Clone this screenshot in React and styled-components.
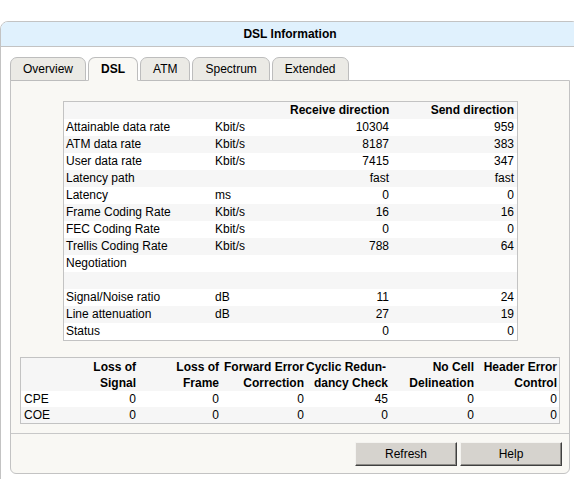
import React from "react";
import styled, { createGlobalStyle } from "styled-components";

// DSL Information page - DSL tab

const GlobalStyle = createGlobalStyle`
    html, body {
        margin: 0;
        padding: 0;
        background: #ffffff;
        overflow: hidden;
    }
    body {
        font-family: "Liberation Sans", Arial, sans-serif;
        font-size: 12px;
        color: #000;
    }
`;

const Page = styled.div`
    padding-top: 21px;
`;

const Frame = styled.div`
    width: 580px;
    border: 1px solid #c3c3c3;
    border-radius: 8px 8px 0 0;
    background: #ffffff;
    box-sizing: border-box;
`;

const FrameTitle = styled.div`
    height: 24px;
    line-height: 24px;
    background: #e0f1fd;
    border-bottom: 1px solid #c3c3c3;
    border-radius: 7px 7px 0 0;
    text-align: center;
    font-weight: bold;
    font-size: 12px;
`;

const FrameBody = styled.div`
    padding: 10px 10px 10px 9px;
`;

const TabRow = styled.div`
    display: flex;
    align-items: flex-end;
    gap: 2px;
    margin-bottom: -1px;
    position: relative;
    z-index: 1;
`;

const Tab = styled.div`
    height: 22px;
    line-height: 22px;
    padding: 0 12px;
    border: 1px solid #bdbdbd;
    border-bottom-color: ${(p) => (p.$active ? "#f9f8f4" : "#bdbdbd")};
    border-radius: 7px 7px 0 0;
    background: ${(p) => (p.$active ? "#f9f8f4" : "#ebeae5")};
    font-weight: ${(p) => (p.$active ? "bold" : "normal")};
    cursor: pointer;
`;

const Panel = styled.div`
    width: 560px;
    box-sizing: border-box;
    background: #f9f8f4;
    border: 1px solid #c3c3c3;
    border-radius: 0 0 6px 6px;
`;

const PanelContent = styled.div`
    padding: 20px 0 9px 9px;
`;

const InfoTable = styled.div`
    width: 455px;
    margin-left: 43px;
    border: 1px solid #c3c3c3;
    box-sizing: border-box;
`;

const InfoRow = styled.div`
    display: grid;
    grid-template-columns: 149px 77px 102px 1fr;
    height: 17px;
    line-height: 17px;
    background: ${(p) => (p.$shade ? "#f6f6f6" : "#ffffff")};
    font-weight: ${(p) => (p.$head ? "bold" : "normal")};
`;

const Cell = styled.div`
    padding: ${(p) => (p.$right ? "0 3px 0 0" : "0 0 0 2px")};
    text-align: ${(p) => (p.$right ? "right" : "left")};
    white-space: nowrap;
    overflow: hidden;
`;

const ErrorTable = styled.div`
    width: 540px;
    margin-top: 16px;
    border: 1px solid #c3c3c3;
    box-sizing: border-box;
`;

const ErrorRow = styled.div`
    display: grid;
    grid-template-columns: 35px 82px 83px 85px 84px 86px 1fr;
    line-height: 16px;
    padding-top: ${(p) => (p.$head ? "1px" : "0")};
    background: ${(p) => (p.$shade ? "#f6f6f6" : "#ffffff")};
    font-weight: ${(p) => (p.$head ? "bold" : "normal")};
`;

const ErrCell = styled.div`
    padding: ${(p) => (p.$left ? "0 0 0 3px" : "0 2px 0 0")};
    text-align: ${(p) => (p.$left ? "left" : "right")};
    white-space: nowrap;
`;

const Hang = styled.span`
    padding-right: 9px;
`;

const Footer = styled.div`
    border-top: 1px solid #c8c8c8;
    display: flex;
    justify-content: flex-end;
    gap: 3px;
    padding: 8px 7px 7px 0;
`;

const Button = styled.button`
    width: 102px;
    height: 24px;
    font-family: "Liberation Sans", Arial, sans-serif;
    font-size: 12px;
    color: #000;
    background: #d6d3ce;
    border: 1px solid;
    border-color: #f4f3f0 #404040 #404040 #f4f3f0;
    box-shadow: inset -1px -1px 0 #8c8a86;
    padding: 0;
    cursor: pointer;
`;

const tabs = ["Overview", "DSL", "ATM", "Spectrum", "Extended"];

const infoRows = [
    ["Attainable data rate", "Kbit/s", "10304", "959"],
    ["ATM data rate", "Kbit/s", "8187", "383"],
    ["User data rate", "Kbit/s", "7415", "347"],
    ["Latency path", "", "fast", "fast"],
    ["Latency", "ms", "0", "0"],
    ["Frame Coding Rate", "Kbit/s", "16", "16"],
    ["FEC Coding Rate", "Kbit/s", "0", "0"],
    ["Trellis Coding Rate", "Kbit/s", "788", "64"],
    ["Negotiation", "", "", ""],
    ["", "", "", ""],
    ["Signal/Noise ratio", "dB", "11", "24"],
    ["Line attenuation", "dB", "27", "19"],
    ["Status", "", "0", "0"],
];

const errorRows = [
    ["CPE", "0", "0", "0", "45", "0", "0"],
    ["COE", "0", "0", "0", "0", "0", "0"],
];

const App = () => {
    return (
        <Page>
            <GlobalStyle />
            <Frame>
                <FrameTitle>DSL Information</FrameTitle>
                <FrameBody>
                    <TabRow>
                        {tabs.map((t) => (
                            <Tab key={t} $active={t === "DSL"}>
                                {t}
                            </Tab>
                        ))}
                    </TabRow>
                    <Panel>
                        <PanelContent>
                            <InfoTable>
                                <InfoRow $head $shade>
                                    <Cell />
                                    <Cell />
                                    <Cell $right>Receive direction</Cell>
                                    <Cell $right>Send direction</Cell>
                                </InfoRow>
                                {infoRows.map((r, i) => (
                                    <InfoRow key={i} $shade={i % 2 === 1}>
                                        <Cell>{r[0]}</Cell>
                                        <Cell>{r[1]}</Cell>
                                        <Cell $right>{r[2]}</Cell>
                                        <Cell $right>{r[3]}</Cell>
                                    </InfoRow>
                                ))}
                            </InfoTable>

                            <ErrorTable>
                                <ErrorRow $head $shade>
                                    <ErrCell $left />
                                    <ErrCell>Loss of<br />Signal</ErrCell>
                                    <ErrCell>Loss of<br />Frame</ErrCell>
                                    <ErrCell>Forward Error<br />Correction</ErrCell>
                                    <ErrCell><Hang>Cyclic Redun-</Hang><br />dancy Check</ErrCell>
                                    <ErrCell>No Cell<br />Delineation</ErrCell>
                                    <ErrCell>Header Error<br />Control</ErrCell>
                                </ErrorRow>
                                {errorRows.map((r, i) => (
                                    <ErrorRow key={r[0]} $shade={i % 2 === 1}>
                                        {r.map((v, j) => (
                                            <ErrCell key={j} $left={j === 0}>{v}</ErrCell>
                                        ))}
                                    </ErrorRow>
                                ))}
                            </ErrorTable>
                        </PanelContent>
                        <Footer>
                            <Button>Refresh</Button>
                            <Button>Help</Button>
                        </Footer>
                    </Panel>
                </FrameBody>
            </Frame>
        </Page>
    );
};

export default App;
